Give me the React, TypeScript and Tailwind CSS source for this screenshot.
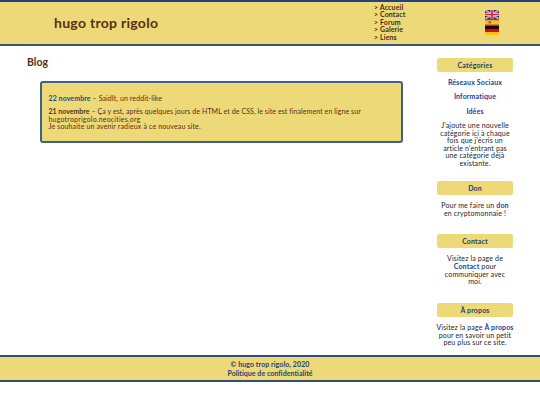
import type { ReactNode } from 'react';

const navLinks = ['Accueil', 'Contact', 'Forum', 'Galerie', 'Liens'];

function SideTitle({ children }: { children: ReactNode }) {
  return (
    <h3 className="h-[14px] rounded-[2.5px] bg-[#edd977] text-[7px] font-bold leading-[14px] tracking-[0.15px] text-[#26416f]">
      {children}
    </h3>
  );
}

function SideLink({ children }: { children: ReactNode }) {
  return (
    <a href="#" className="font-bold text-[#1c3f9a]">
      {children}
    </a>
  );
}

function Flags() {
  return (
    <svg width="14" height="26" viewBox="0 0 14 26" className="block">
      <rect width="14" height="9" fill="#26306f" />
      <path d="M0 0L14 9M14 0L0 9" stroke="#f1dfe4" strokeWidth="1.8" />
      <path d="M0 0L14 9M14 0L0 9" stroke="#cc3048" strokeWidth="0.6" />
      <path d="M7 0V9M0 4.5H14" stroke="#f4e8ea" strokeWidth="3" />
      <path d="M7 0V9M0 4.5H14" stroke="#cf1d35" strokeWidth="1.6" />
      <rect y="9" width="14" height="1.5" fill="#c92a28" />
      <rect y="10.5" width="14" height="4" fill="#fcc21b" />
      <rect x="3.5" y="11" width="2.5" height="2.5" fill="#b9672c" />
      <rect y="14.5" width="14" height="1.5" fill="#c8322a" />
      <rect y="16" width="14" height="3" fill="#1c0b08" />
      <rect y="19" width="14" height="3" fill="#d80c0c" />
      <rect y="22" width="14" height="3" fill="#fcc419" />
    </svg>
  );
}

export default function App() {
  return (
    <div className="h-[405px] w-[540px] overflow-hidden bg-white font-['Lato','Open_Sans',sans-serif] text-[7px] leading-[7.6px] text-[#5a2f16]">
      <header className="flex h-[46px] border-b-2 border-t-2 border-b-[#38547f] border-t-[#24437c] bg-[#edd977]">
        <h1 className="w-[374px] whitespace-nowrap pl-[54px] pt-[12px] text-[14px] font-bold leading-[18px] tracking-[0.28px]">
          hugo trop rigolo
        </h1>
        <nav className="w-[111px] pt-[1.5px] font-bold tracking-[0.12px] text-[#4d2914]">
          {navLinks.map((link) => (
            <a key={link} href="#" className="block whitespace-nowrap">
              &gt; {link}
            </a>
          ))}
        </nav>
        <div className="pt-[8px]">
          <Flags />
        </div>
      </header>

      <div className="flex h-[309px]">
        <main className="w-[437px] pt-[9px]">
          <h2 className="pl-[27px] text-[10.5px] font-bold leading-[14px]">Blog</h2>
          <section className="ml-[40px] mt-[12px] h-[62px] w-[363px] whitespace-nowrap rounded-[3px] border-2 border-[#3f5f8c] bg-[#edd977] pl-[6.5px] pt-[12px]">
            <p className="tracking-[0.1px]">
              <a href="#" className="font-bold text-[#205083]">22 novembre</a> – SaidIt, un reddit-like
            </p>
            <p className="mt-[5.5px]">
              <b>21 novembre</b>
              <span className="tracking-[0.08px]">
                {' '}– Ça y est, après quelques jours de HTML et de CSS, le site est finalement en ligne sur
              </span>
              <br />
              <span className="tracking-[0.2px]">hugotroprigolo.neocities.org</span>
              <br />
              <span className="tracking-[0.14px]">Je souhaite un avenir radieux à ce nouveau site.</span>
            </p>
          </section>
        </main>

        <aside className="w-[76px] whitespace-nowrap pt-[12px] text-center tracking-[0.15px] text-[#24242a]">
          <SideTitle>Catégories</SideTitle>
          <div className="mt-[7px] flex flex-col gap-[6.8px]">
            <SideLink>Réseaux Sociaux</SideLink>
            <SideLink>Informatique</SideLink>
            <SideLink>Idées</SideLink>
          </div>
          <p className="mt-[6.6px] h-[59px]">
            J'ajoute une nouvelle<br />
            catégorie ici à chaque<br />
            fois que j'écris un<br />
            article n'entrant pas<br />
            une catégorie déjà<br />
            existante.
          </p>
          <SideTitle>Don</SideTitle>
          <p className="h-[39px] pt-[7.5px]">
            Pour me faire un <SideLink>don</SideLink><br />
            en cryptomonnaie !
          </p>
          <SideTitle>Contact</SideTitle>
          <p className="h-[55px] pt-[7.5px]">
            Visitez la page de<br />
            <SideLink>Contact</SideLink> pour<br />
            communiquer avec<br />
            moi.
          </p>
          <SideTitle>À propos</SideTitle>
          <p className="-mx-[2px] pt-[7px]">
            Visitez la page <SideLink>À propos</SideLink><br />
            pour en savoir un petit<br />
            peu plus sur ce site.
          </p>
        </aside>
      </div>

      <footer className="h-[27px] border-y-2 border-[#2f4f78] bg-[#edd977] pt-[2.5px] text-center font-bold leading-[9px] text-[#26416f]">
        <p className="tracking-[0.08px]">© hugo trop rigolo, 2020</p>
        <a href="#" className="block tracking-[0.05px]">Politique de confidentialité</a>
      </footer>
    </div>
  );
}
